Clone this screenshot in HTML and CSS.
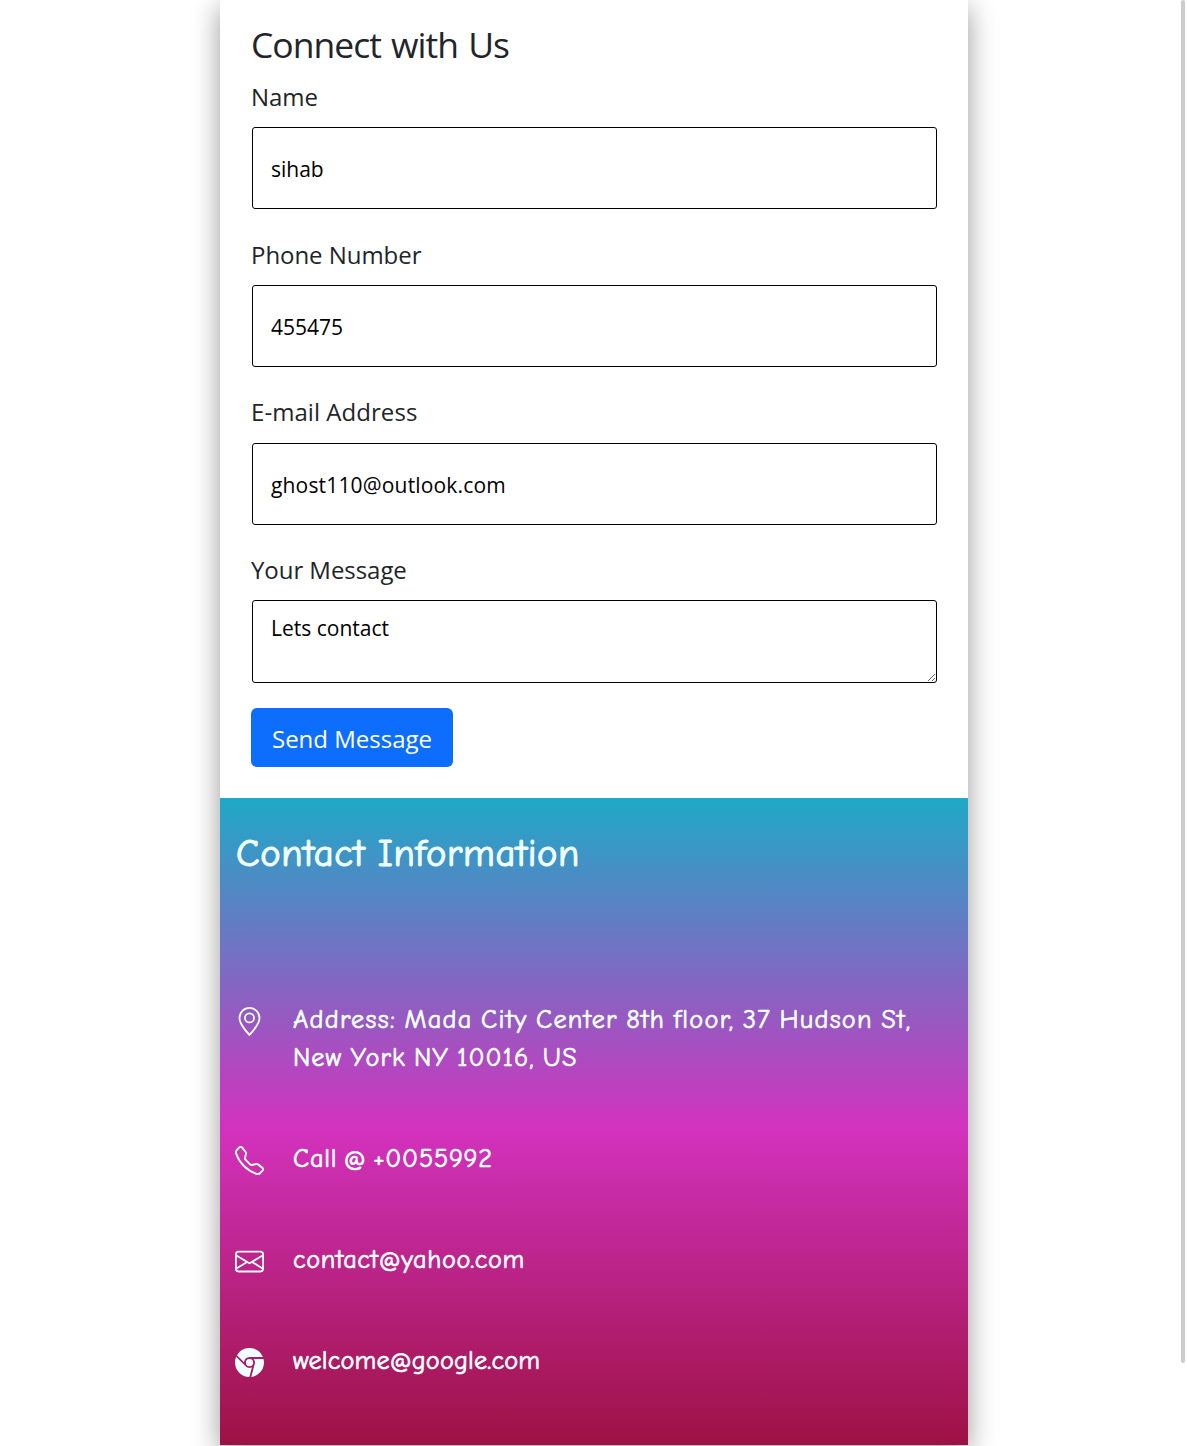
FILE: index.html
```html
<!DOCTYPE html>
<html lang="en">
<head>
<meta charset="utf-8">
<title>Connect with Us</title>
<link rel="stylesheet" href="styles.css">
</head>
<body>
<main class="card">
  <form class="form">
    <h1 class="title">Connect with Us</h1>
    <label class="label" for="name">Name</label>
    <input class="field" id="name" type="text" value="sihab">
    <label class="label" for="phone">Phone Number</label>
    <input class="field" id="phone" type="text" value="455475">
    <label class="label label-mail" for="mail">E-mail Address</label>
    <input class="field field-mail" id="mail" type="text" value="ghost110@outlook.com">
    <label class="label" for="message">Your Message</label>
    <textarea class="field area" id="message">Lets contact</textarea>
    <button class="send" type="button">Send Message</button>
  </form>
  <section class="info">
    <h2 class="info-title">Contact Information</h2>
    <ul class="list">
      <li class="item">
        <svg class="icon" viewBox="0 0 16 16"><path d="M12.166 8.94c-.524 1.062-1.234 2.12-1.96 3.07A31.493 31.493 0 0 1 8 14.58a31.481 31.481 0 0 1-2.206-2.57c-.726-.95-1.436-2.008-1.96-3.07C3.304 7.867 3 6.862 3 6a5 5 0 0 1 10 0c0 .862-.305 1.867-.834 2.94zM8 16s6-5.686 6-10A6 6 0 0 0 2 6c0 4.314 6 10 6 10z"/><path d="M8 8a2 2 0 1 1 0-4 2 2 0 0 1 0 4zm0 1a3 3 0 1 0 0-6 3 3 0 0 0 0 6z"/></svg>
        <span class="text"><span class="line address-1">Address: Mada City Center 8th floor, 37 Hudson St,</span> <span class="line address-2">New York NY 10016, US</span></span>
      </li>
      <li class="item">
        <svg class="icon" viewBox="0 0 16 16"><path d="M3.654 1.328a.678.678 0 0 0-1.015-.063L1.605 2.3c-.483.484-.661 1.169-.45 1.77a17.568 17.568 0 0 0 4.168 6.608 17.569 17.569 0 0 0 6.608 4.168c.601.211 1.286.033 1.77-.45l1.034-1.034a.678.678 0 0 0-.063-1.015l-2.307-1.794a.678.678 0 0 0-.58-.122l-2.19.547a1.745 1.745 0 0 1-1.657-.459L5.482 8.062a1.745 1.745 0 0 1-.46-1.657l.548-2.19a.678.678 0 0 0-.122-.58L3.654 1.328zM1.884.511a1.745 1.745 0 0 1 2.612.163L6.29 2.98c.329.423.445.974.315 1.494l-.547 2.19a.678.678 0 0 0 .178.643l2.457 2.457a.678.678 0 0 0 .644.178l2.189-.547a1.745 1.745 0 0 1 1.494.315l2.306 1.794c.829.645.905 1.87.163 2.611l-1.034 1.034c-.74.74-1.846 1.065-2.877.702a18.634 18.634 0 0 1-7.01-4.42 18.634 18.634 0 0 1-4.42-7.009c-.362-1.03-.037-2.137.703-2.877L1.885.511z"/></svg>
        <span class="text phone">Call @ +0055992</span>
      </li>
      <li class="item">
        <svg class="icon" viewBox="0 0 16 16"><path d="M0 4a2 2 0 0 1 2-2h12a2 2 0 0 1 2 2v8a2 2 0 0 1-2 2H2a2 2 0 0 1-2-2V4Zm2-1a1 1 0 0 0-1 1v.217l7 4.2 7-4.2V4a1 1 0 0 0-1-1H2Zm13 2.383-4.708 2.825L15 11.105V5.383Zm-.034 6.876-5.64-3.471L8 9.583l-1.326-.795-5.64 3.47A1 1 0 0 0 2 13h12a1 1 0 0 0 .966-.741ZM1 11.105l4.708-2.897L1 5.383v5.722Z"/></svg>
        <span class="text mail">contact@yahoo.com</span>
      </li>
      <li class="item">
        <svg class="icon" viewBox="0 0 16 16"><path fill-rule="evenodd" d="M16 8a8.001 8.001 0 0 1-7.022 7.94l1.902-7.098a2.995 2.995 0 0 0 .05-1.492A2.977 2.977 0 0 0 10.237 6h5.511A8 8 0 0 1 16 8ZM0 8a8 8 0 0 0 7.927 8l1.426-5.321a2.978 2.978 0 0 1-.723.255 2.979 2.979 0 0 1-1.743-.147 2.986 2.986 0 0 1-1.043-.7L.633 4.876A7.975 7.975 0 0 0 0 8Zm5.004-.167L1.108 3.936A8.003 8.003 0 0 1 15.418 5H8.066a2.979 2.979 0 0 0-1.252.243 2.987 2.987 0 0 0-1.81 2.59ZM8 10a2 2 0 1 0 0-4 2 2 0 0 0 0 4Z"/></svg>
        <span class="text web">welcome@google.com</span>
      </li>
    </ul>
  </section>
</main>
<div class="scrollbar"></div>
</body>
</html>
```
FILE: styles.css
```css
* { box-sizing: border-box; }
body {
  margin: 0;
  height: 1446px;
  overflow: hidden;
  background: #fff;
  color: #212529;
  font-family: "Segoe UI", "Open Sans", sans-serif;
}
.card {
  width: 748px;
  height: 1445px;
  margin-left: 220px;
  display: flex;
  flex-direction: column;
  box-shadow: 0 7px 26px rgba(0, 0, 0, .4);
}
.form {
  height: 798px;
  padding: 21px 31px 0 32px;
  display: flex;
  flex-direction: column;
  flex: none;
  background: #fff;
}
.title {
  margin: 0 0 11px -1px;
  font-size: 35.5px;
  line-height: 46px;
  font-weight: 400;
  letter-spacing: -1px;
  word-spacing: 2px;
}
.label {
  margin: 0 0 11px -1px;
  font-size: 24px;
  line-height: 38px;
  letter-spacing: -.05px;
}
.label-mail {
  margin-top: -1px;
  margin-bottom: 12px;
  letter-spacing: .05px;
}
.field {
  width: 685px;
  height: 82px;
  margin: 0 0 27px;
  padding: 2px 18px 0;
  border: 1px solid #000;
  border-radius: 3px;
  background: #fff;
  color: #000;
  font-family: inherit;
  font-size: 21px;
  outline: none;
}
.field-mail {
  margin-bottom: 26px;
  letter-spacing: .17px;
}
.area {
  height: 83px;
  margin-bottom: 25px;
  padding: 10px 18px;
  line-height: 34px;
  resize: vertical;
}
.send {
  width: 202px;
  height: 59px;
  margin-left: -1px;
  padding: 1px 0 0;
  border: 0;
  border-radius: 6px;
  background: #0d6efd;
  color: #fff;
  font-family: inherit;
  font-size: 24px;
}
.info {
  height: 647px;
  padding: 33px 15px 0;
  background: linear-gradient(#1fa9c7, #d332be 51%, #9d1244);
  color: azure;
  font-family: "Comic Sans MS", "Comic Neue", cursive;
  font-variant-ligatures: none;
}
.info-title {
  margin: 0 0 124px 1px;
  font-size: 38.5px;
  line-height: 46px;
  font-weight: 400;
  letter-spacing: .65px;
  word-spacing: -1px;
  -webkit-text-stroke: 1.1px;
}
.list {
  margin: 0;
  padding: 0;
  list-style: none;
  display: flex;
  flex-direction: column;
  gap: 63px;
}
.item {
  display: flex;
  gap: 29px;
}
.icon {
  width: 29px;
  height: 29px;
  margin-top: 6px;
  flex: none;
  fill: currentColor;
}
.text {
  font-size: 26.3px;
  line-height: 38px;
  white-space: nowrap;
  -webkit-text-stroke: .7px;
}
.line { display: block; }
.address-1 {
  letter-spacing: 1.25px;
  word-spacing: -1.5px;
}
.address-2 {
  letter-spacing: 1px;
  word-spacing: -1.5px;
}
.phone {
  letter-spacing: .75px;
  word-spacing: -3px;
}
.mail { letter-spacing: .58px; }
.web { letter-spacing: .15px; }
.scrollbar {
  position: absolute;
  top: 0;
  left: 1181px;
  width: 4px;
  height: 1363px;
  border-radius: 2px;
  background: #ccc;
}
```
